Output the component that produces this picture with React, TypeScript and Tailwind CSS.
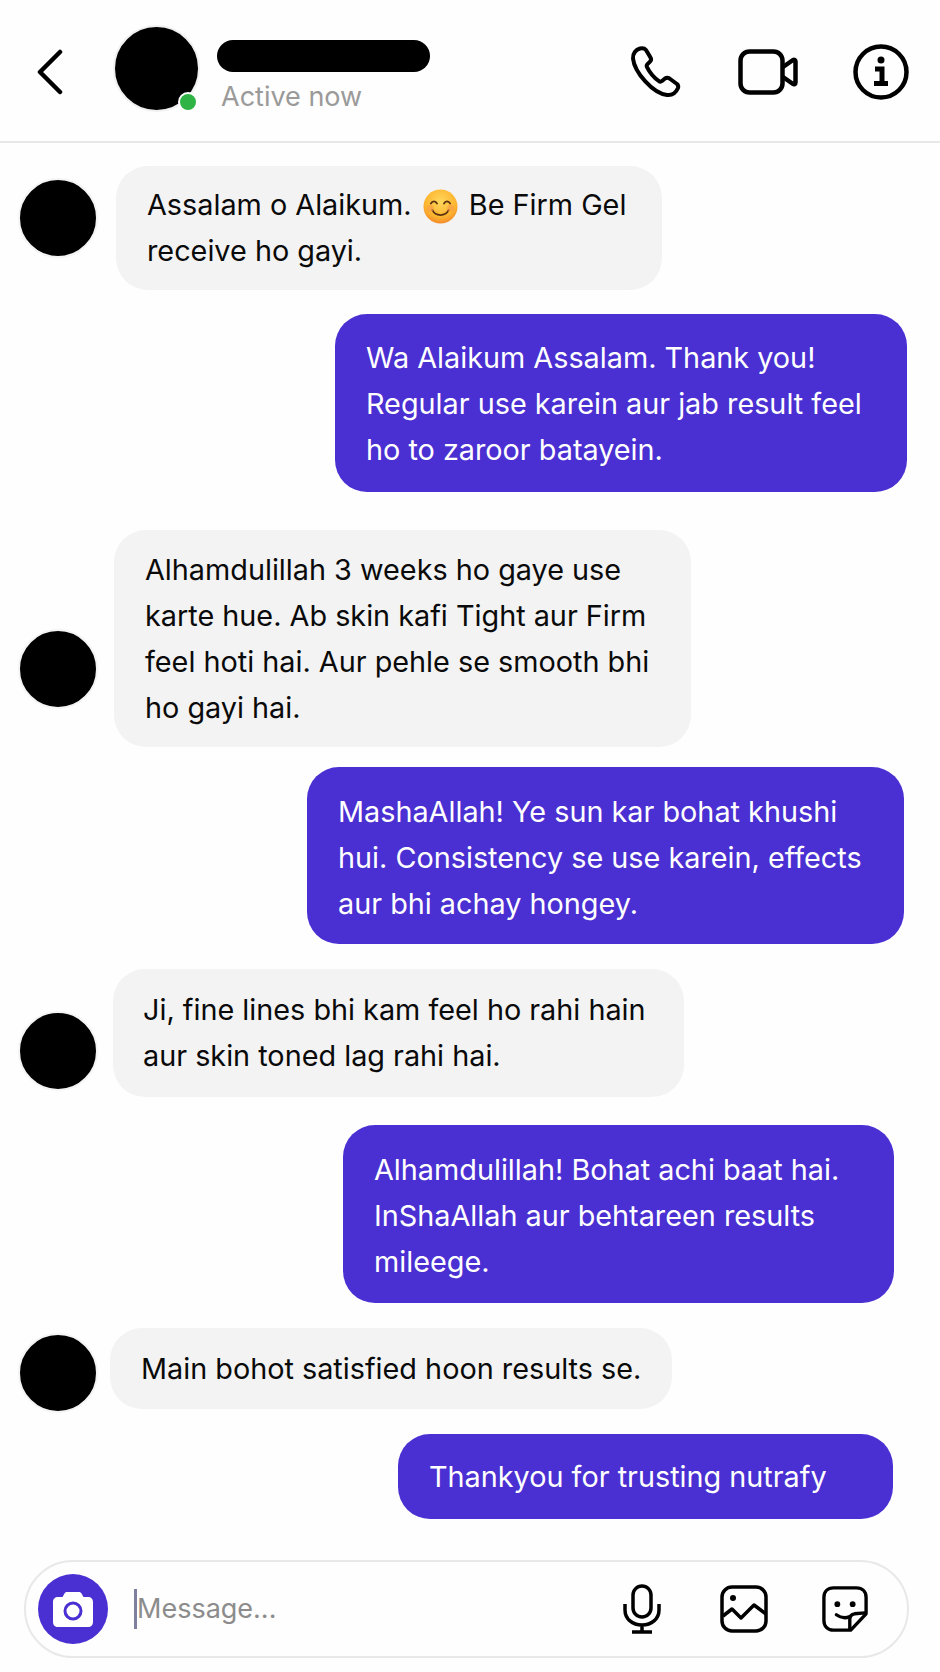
import React from 'react';

const FONT = "font-['Inter',sans-serif]";

const Smile: React.FC = () => (
  <svg width="35" height="35" viewBox="0 0 36 36" className="inline-block align-[-9px] mx-[3px]">
    <defs>
      <radialGradient id="face" cx="50%" cy="35%" r="70%">
        <stop offset="0%" stopColor="#ffd65c" />
        <stop offset="65%" stopColor="#fdb52f" />
        <stop offset="100%" stopColor="#f0802a" />
      </radialGradient>
    </defs>
    <circle cx="18" cy="18" r="17.5" fill="url(#face)" />
    <path d="M8 15c1.5-3 5-3 6.5 0M21.500 15c1.500-3 5-3 6.500 0" fill="none" stroke="#5c3310" strokeWidth="1.800" strokeLinecap="round" />
    <path d="M9.500 21.500c3.500 7 13.500 7 17 0" fill="none" stroke="#5c3310" strokeWidth="1.800" strokeLinecap="round" />
    <circle cx="7.500" cy="20" r="3.500" fill="#f79a4a" opacity="0.6" />
    <circle cx="28.500" cy="20" r="3.500" fill="#f79a4a" opacity="0.6" />
  </svg>
);

const Received: React.FC<{ className: string; avatar: string; bubble: string; children: React.ReactNode }> = ({ className, avatar, bubble, children }) => (
  <div className={`flex items-start pl-[18px] ${className}`}>
    <div className={`w-[80px] h-[80px] rounded-full bg-black shrink-0 border-2 border-[#f4f4f4] ${avatar}`} />
    <div className={`bg-[#f3f3f3] text-[#0a0a0a] rounded-[32px] ${bubble}`}>{children}</div>
  </div>
);

const Sent: React.FC<{ className: string; bubble: string; children: React.ReactNode }> = ({ className, bubble, children }) => (
  <div className={`flex justify-end ${className}`}>
    <div className={`bg-[#4a2fd2] text-white rounded-[32px] ${bubble}`}>{children}</div>
  </div>
);

const App: React.FC = () => {
  return (
    <div className={`w-[940px] h-[1672px] bg-[#fefefe] flex flex-col overflow-hidden ${FONT} text-[28.8px] leading-[46px]`}>
      {/* header */}
      <div className="h-[143px] shrink-0 border-b-2 border-[#e8e8e8] flex items-center pl-[37px] pr-[31px] pb-[1px]">
        <svg width="26" height="46" viewBox="0 0 26 46" fill="none" stroke="#000" strokeWidth="4.500" strokeLinecap="round" strokeLinejoin="round" className="mt-[3px]">
          <path d="M23 3 3 23l20 20" />
        </svg>
        <div className="relative w-[87px] h-[87px] rounded-full bg-black border-2 border-[#f0f0f0] ml-[50px] mb-[4px] shrink-0">
          <div className="absolute right-[0px] bottom-[-2px] w-[20px] h-[20px] rounded-full bg-[#2fb344] border-2 border-white" />
        </div>
        <div className="ml-[17px] flex flex-col mt-[13px]">
          <div className="w-[213px] h-[32px] rounded-full bg-black" />
          <div className="text-[27px] leading-[32px] text-[#9a9a9a] mt-[9px] ml-[4px]">Active now</div>
        </div>
        <div className="ml-auto flex items-center mt-[3px]">
          <svg width="54" height="54" viewBox="0 0 54 54" fill="none" stroke="#000" strokeWidth="4" strokeLinejoin="round" strokeLinecap="round">
            <path d="M12 3.500c-4 1-7.500 5-7 10 1.500 14 20 35 34 36.500 5 .5 9-2.500 11-7 .5-1.500 0-3-1-4l-7.500-5.500c-1.500-1-3-1-4.500 0l-3 2.500c-1 .8-2 .8-3 .2-4.500-3-9.500-9-12-14-.5-1-.3-2.200.5-3l2.500-2.500c1.200-1.200 1.300-2.800.500-4.200L18 5c-1.300-1.500-4-2-6-1.500Z" />
          </svg>
          <svg width="60" height="46" viewBox="0 0 60 46" fill="none" stroke="#000" strokeWidth="4.500" strokeLinejoin="round" className="ml-[56px]">
            <rect x="2.500" y="2.500" width="42" height="41" rx="9" />
            <path d="M45 18 55 11c1.200-.8 2.500 0 2.500 1.500v21c0 1.500-1.300 2.300-2.500 1.500L45 28" />
          </svg>
          <svg width="56" height="56" viewBox="0 0 56 56" fill="none" stroke="#000" className="ml-[55px]">
            <circle cx="28" cy="28" r="25.500" strokeWidth="4.500" />
            <circle cx="28" cy="16" r="3.500" fill="#000" stroke="none" />
            <path d="M22 25h7v14M21 39.500h14" strokeWidth="5" />
          </svg>
        </div>
      </div>

      {/* messages */}
      <Received className="mt-[23px]" avatar="mt-[12px]" bubble="ml-[18px] w-[546px] h-[124px] pl-[31px] pt-[16px]">
        <div>Assalam o Alaikum. <Smile /> Be Firm Gel</div>
        <div>receive ho gayi.</div>
      </Received>
      <Sent className="mt-[24px] pr-[33px]" bubble="w-[572px] h-[178px] pl-[31px] pt-[21px]">
        <div>Wa Alaikum Assalam. Thank you!</div>
        <div>Regular use karein aur jab result feel</div>
        <div>ho to zaroor batayein.</div>
      </Sent>
      <Received className="mt-[38px]" avatar="mt-[99px]" bubble="ml-[16px] w-[577px] h-[217px] pl-[31px] pt-[17px]">
        <div>Alhamdulillah 3 weeks ho gaye use</div>
        <div>karte hue. Ab skin kafi Tight aur Firm</div>
        <div>feel hoti hai. Aur pehle se smooth bhi</div>
        <div>ho gayi hai.</div>
      </Received>
      <Sent className="mt-[20px] pr-[36px]" bubble="w-[597px] h-[177px] pl-[31px] pt-[22px]">
        <div>MashaAllah! Ye sun kar bohat khushi</div>
        <div>hui. Consistency se use karein, effects</div>
        <div>aur bhi achay hongey.</div>
      </Sent>
      <Received className="mt-[25px]" avatar="mt-[42px]" bubble="ml-[15px] w-[571px] h-[128px] pl-[30px] pt-[18px]">
        <div>Ji, fine lines bhi kam feel ho rahi hain</div>
        <div>aur skin toned lag rahi hai.</div>
      </Received>
      <Sent className="mt-[28px] pr-[46px]" bubble="w-[551px] h-[178px] pl-[31px] pt-[22px]">
        <div>Alhamdulillah! Bohat achi baat hai.</div>
        <div>InShaAllah aur behtareen results</div>
        <div>mileege.</div>
      </Sent>
      <Received className="mt-[25px]" avatar="mt-[5px]" bubble="ml-[12px] w-[562px] h-[81px] pl-[31px] pt-[18px]">
        <div>Main bohot satisfied hoon results se.</div>
      </Received>
      <Sent className="mt-[21px] pr-[47px]" bubble="w-[495px] h-[85px] pl-[31px] pt-[20px]">
        <div>Thankyou for trusting nutrafy</div>
      </Sent>

      {/* composer */}
      <div className="mt-[41px] mx-[24px] w-[885px] h-[98px] rounded-full border-2 border-[#e8e8e8] flex items-center pl-[12px] pr-[39px]">
        <div className="w-[70px] h-[70px] rounded-full bg-[#4a2fd2] flex items-center justify-center shrink-0">
          <svg width="40" height="36" viewBox="0 0 40 36">
            <path d="M14 1h12c1 0 2 .5 2.500 1.500L30.500 6H35c3 0 5 2 5 5v20c0 3-2 5-5 5H5c-3 0-5-2-5-5V11c0-3 2-5 5-5h4.500l2-3.500C12 1.500 13 1 14 1Z" fill="#fff" />
            <circle cx="20" cy="20" r="8" fill="none" stroke="#4a2fd2" strokeWidth="3" />
          </svg>
        </div>
        <div className="w-[3px] h-[40px] bg-[#7f7f9f] ml-[26px]" />
        <div className="text-[#8c8c8c] text-[27px] leading-[40px]">Message...</div>
        <div className="ml-auto flex items-center">
          <svg width="38" height="50" viewBox="0 0 38 50" fill="none" stroke="#000" strokeWidth="3.500" strokeLinecap="butt" className="mr-[-1px]">
            <rect x="10" y="2" width="18" height="31" rx="9" />
            <path d="M2 20v6c0 9 7.500 15 17 15s17-6 17-15v-6M19 41v7M9 48h20" />
          </svg>
          <svg width="48" height="48" viewBox="0 0 48 48" fill="none" stroke="#000" strokeWidth="3.500" strokeLinejoin="round" className="ml-[60px]">
            <rect x="2" y="2" width="44" height="44" rx="10" />
            <circle cx="13" cy="13" r="3" fill="#000" stroke="none" />
            <path d="M3 31l9-7 9 9 13-13 12 9" />
          </svg>
          <svg width="46" height="46" viewBox="0 0 48 48" fill="none" stroke="#000" strokeWidth="3.500" strokeLinejoin="round" strokeLinecap="round" className="ml-[54px]">
            <path d="M12 2h24c6 0 10 4 10 10v17L30 46H12C6 46 2 42 2 36V12C2 6 6 2 12 2Z" />
            <path d="M45 28 34 29c-3 .5-5 3-5 6v10" />
            <circle cx="16" cy="19" r="3" fill="#000" stroke="none" />
            <circle cx="32" cy="19" r="3" fill="#000" stroke="none" />
            <path d="M15 30c4 3 9 4 14 2" />
          </svg>
        </div>
      </div>
    </div>
  );
};

export default App;
